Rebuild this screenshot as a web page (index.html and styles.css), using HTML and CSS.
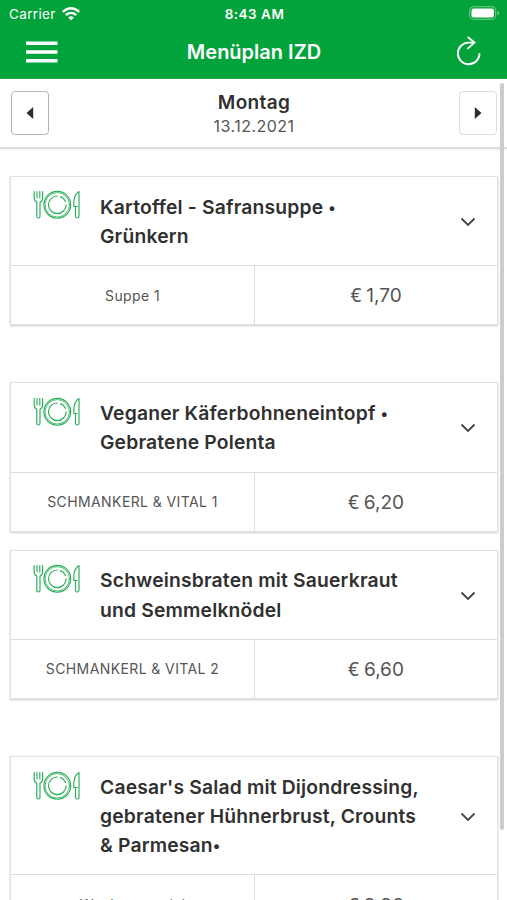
FILE: index.html
```html
<!DOCTYPE html>
<html lang="de">
<head>
<meta charset="utf-8">
<title>Menüplan IZD</title>
<link rel="stylesheet" href="styles.css">
</head>
<body>
<svg class="symbols" aria-hidden="true">
  <symbol id="meal" viewBox="0 0 48 30">
    <g fill="none" stroke="currentColor" stroke-width="1.15" stroke-linecap="round" stroke-linejoin="round">
      <path d="M1.2 1.5V8Q1.200 11 3.800 12.200V26.200Q3.800 28 5.400 28T7 26.200V12.200Q9.600 11 9.600 8V1.500M4 1.500V8M6.800 1.500V8"/>
      <circle cx="24.3" cy="14.8" r="13.4"/>
      <circle cx="24.3" cy="14.8" r="12.2" stroke-width=".8"/>
      <path d="M24.300 6A8.800 8.800 0 1 0 33.100 14.800M27.500 6.600A8.800 8.800 0 0 1 32.500 11.500"/>
      <path d="M46 1.500Q40.800 4.500 40.800 13.500V16.500H42.500V26.200Q42.500 28 44.200 28T46 26.200ZM42.500 16.500H44"/>
    </g>
  </symbol>
  <symbol id="chevron" viewBox="0 0 16 10"><path d="M1.500 1.500 8 8l6.500-6.500" fill="none" stroke="currentColor" stroke-width="1.800"/></symbol>
</svg>
<header class="top">
  <div class="status">
    <div class="carrier">Carrier
      <svg width="18" height="14" viewBox="0 0 18 14"><g fill="none" stroke="#fff" stroke-width="2.300"><path d="M.8 4.800Q9-2.200 17.200 4.800M3.800 8Q9 3.700 14.200 8"/></g><path d="M6.200 10.400Q9 8.200 11.800 10.400L9 13.400z" fill="#fff"/></svg>
    </div>
    <div class="clock">8:43 AM</div>
    <div class="battery"><svg width="31" height="14" viewBox="0 0 31 14"><rect x=".7" y=".7" width="26" height="12.600" rx="3.800" fill="none" stroke="#79cb8d" stroke-width="1"/><rect x="2.500" y="2.500" width="22.400" height="9" rx="2" fill="#fff"/><path d="M28.300 4.700v4.600q1.800-.7 1.800-2.300t-1.800-2.300" fill="#79cb8d"/></svg></div>
  </div>
  <div class="bar">
    <svg class="burger" width="32" height="22" viewBox="0 0 32 22"><path d="M0 2.300h31.500M0 11h31.500M0 19.700h31.500" stroke="#fff" stroke-width="3.600"/></svg>
    <h1>Menüplan IZD</h1>
    <svg class="reload" width="26" height="30" viewBox="0 0 26 30"><path d="M18.500 6.600H12.700A10.800 10.800 0 1 0 23.500 17.300M11.700 1 18.500 6.600 11.400 12.900" fill="none" stroke="#fff" stroke-width="1.900"/></svg>
  </div>
</header>
<nav class="days">
  <button class="step"><svg width="8" height="12" viewBox="0 0 8 12"><path d="M7.200 0v12L.5 6z" fill="#2e2e2e"/></svg></button>
  <div class="day"><strong>Montag</strong><span>13.12.2021</span></div>
  <button class="step next"><svg width="8" height="12" viewBox="0 0 8 12"><path d="M.8 0v12L7.500 6z" fill="#2e2e2e"/></svg></button>
</nav>
<main class="list">
  <article class="card spaced">
    <div class="dish"><svg class="meal"><use href="#meal"/></svg><h2>Kartoffel - Safransuppe <span class="dot">•</span><br>Grünkern</h2><svg class="chevron"><use href="#chevron"/></svg></div>
    <div class="info"><div class="kind">Suppe 1</div><div class="price"><span class="euro">€</span>1,70</div></div>
  </article>
  <article class="card">
    <div class="dish"><svg class="meal"><use href="#meal"/></svg><h2>Veganer Käferbohneneintopf <span class="dot">•</span><br>Gebratene Polenta</h2><svg class="chevron"><use href="#chevron"/></svg></div>
    <div class="info"><div class="kind">SCHMANKERL &amp; VITAL 1</div><div class="price"><span class="euro">€</span>6,20</div></div>
  </article>
  <article class="card spaced">
    <div class="dish"><svg class="meal"><use href="#meal"/></svg><h2>Schweinsbraten mit Sauerkraut<br>und Semmelknödel</h2><svg class="chevron"><use href="#chevron"/></svg></div>
    <div class="info"><div class="kind">SCHMANKERL &amp; VITAL 2</div><div class="price"><span class="euro">€</span>6,60</div></div>
  </article>
  <article class="card">
    <div class="dish"><svg class="meal"><use href="#meal"/></svg><h2>Caesar's Salad mit Dijondressing,<br>gebratener Hühnerbrust, Crounts<br>&amp; Parmesan<span class="dot">•</span></h2><svg class="chevron"><use href="#chevron"/></svg></div>
    <div class="info"><div class="kind">Wochenspezial</div><div class="price"><span class="euro">€</span>9,90</div></div>
  </article>
</main>
<div class="scrollbar"></div>
</body>
</html>
```
FILE: styles.css
```css
* { box-sizing: border-box; }
html { height: 100%; overflow: hidden; }
body { margin: 0; height: 900px; overflow: hidden; background: #fff; color: #303030; font-family: Inter, "Liberation Sans", sans-serif; }
svg { display: block; flex: none; }
.symbols { position: absolute; width: 0; height: 0; }
.top { height: 79px; background: #02a33b; color: #fff; }
.status { height: 27px; display: grid; grid-template-columns: 1fr auto 1fr; align-items: center; padding: 0 7px 0 9px; font-size: 13.5px; }
.carrier { display: flex; align-items: center; gap: 6px; letter-spacing: .35px; }
.clock { font-weight: 600; font-size: 13.5px; letter-spacing: .5px; }
.battery { display: flex; justify-content: flex-end; margin-top: -1px; }
.bar { height: 52px; display: grid; grid-template-columns: 1fr auto 1fr; align-items: center; padding: 0 25px 2px 26px; }
.bar h1 { margin: 0; font-size: 20px; font-weight: 600; line-height: 24px; }
.reload { justify-self: end; margin-top: -2px; }
.days { height: 70px; display: flex; justify-content: space-between; align-items: flex-start; padding: 12px 10px 0 11px; border-bottom: 2px solid #dedede; box-shadow: 0 1px 2px #eee; }
.step { width: 38px; height: 44px; padding: 0; display: flex; align-items: center; justify-content: center; background: #fff; border: 1px solid #b5b5b5; border-radius: 4px; }
.next { border-color: #ddd; }
.day { display: flex; flex-direction: column; align-items: center; }
.day strong { font-size: 19px; line-height: 23px; font-weight: 600; letter-spacing: .35px; }
.day span { font-size: 16px; line-height: 25px; color: #555; letter-spacing: .5px; }
.list { padding: 27px 9px 0 10px; }
.card { border: 1px solid #e1e1e1; box-shadow: 0 1px 2px #ccc; margin-bottom: 17.7px; }
.card.spaced { margin-bottom: 57px; }
.dish { display: flex; align-items: center; padding: 15.6px 21.5px 13.9px 22px; border-bottom: 1px solid #ddd; }
.meal { width: 48px; height: 30px; align-self: flex-start; margin-top: -2.2px; color: #2bad5a; }
.dish h2 { flex: 1; margin: 0 0 0 19px; font-size: 19.3px; line-height: 29.3px; font-weight: 600; letter-spacing: .18px; white-space: nowrap; }
.dot { font-size: 15px; line-height: 1; vertical-align: 1px; }
.chevron { width: 16px; height: 10px; color: #444; }
.info { display: grid; grid-template-columns: 244px 1fr; height: 58.4px; }
.kind, .price { display: flex; align-items: center; justify-content: center; color: #555; }
.kind { font-size: 14px; letter-spacing: .4px; border-right: 1px solid #ddd; }
.price { font-size: 19px; padding-top: 1px; }
.euro { font-family: "Noto Sans", sans-serif; line-height: 1; margin-right: 5px; }
.scrollbar { position: absolute; right: 3px; top: 83px; width: 4px; height: 747px; border-radius: 2px; background: #ccc; }
```
